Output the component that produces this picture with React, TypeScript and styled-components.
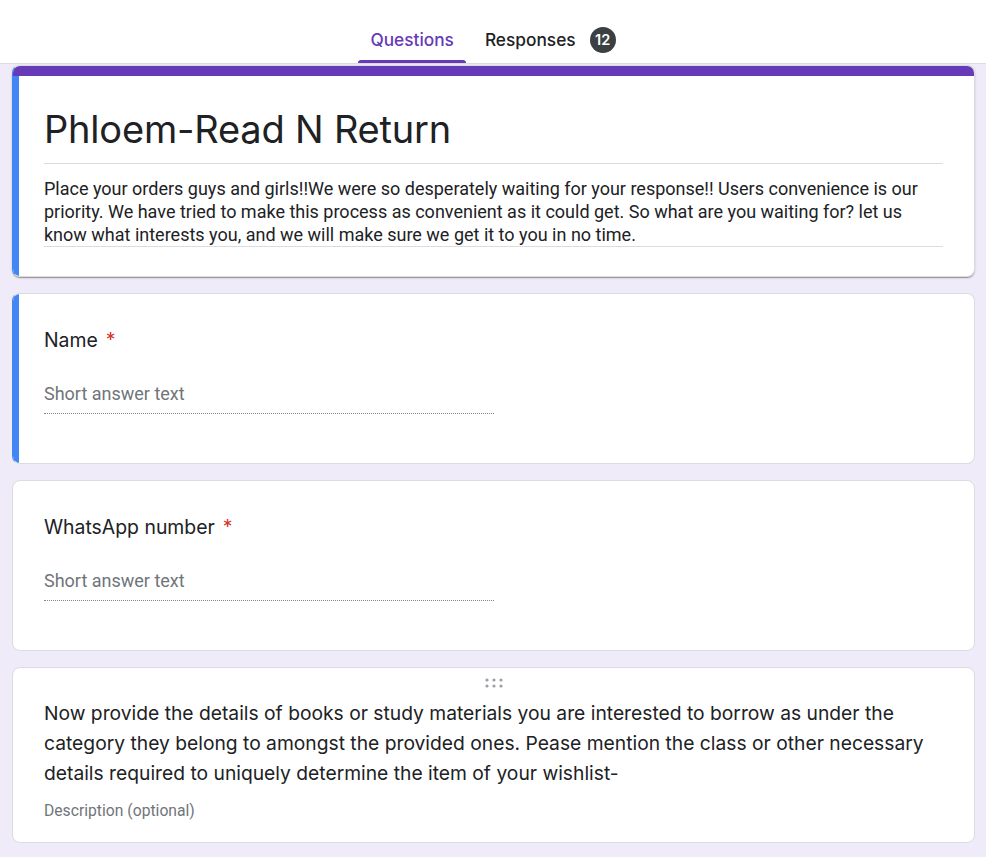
import React from 'react';
import styled, { createGlobalStyle } from 'styled-components';

const GlobalStyle = createGlobalStyle`
  html, body {
    margin: 0;
    padding: 0;
    background: #f0ebf8;
  }
  body {
    font-family: Roboto, "Liberation Sans", Arial, sans-serif;
    color: #202124;
  }
`;

const SANS = `Inter, Roboto, "Liberation Sans", sans-serif`;

const Header = styled.header`
  height: 63px;
  background: #fff;
  border-bottom: 1px solid #dadce0;
  display: flex;
  justify-content: center;
  align-items: flex-end;
  gap: 7px;
`;

const Tab = styled.div`
  height: 48px;
  display: flex;
  flex-direction: column;
  cursor: pointer;
`;

const TabLabel = styled.div<{ $active?: boolean }>`
  flex: 1;
  display: flex;
  align-items: center;
  padding: 4px 12px 0;
  font-family: ${SANS};
  font-size: 17.3px;
  font-weight: 500;
  color: ${p => (p.$active ? '#673ab7' : '#202124')};
`;

const TabLine = styled.div<{ $active?: boolean }>`
  height: 3px;
  border-radius: 3px 3px 0 0;
  background: ${p => (p.$active ? '#673ab7' : 'transparent')};
`;

const Badge = styled.span`
  margin-left: 14px;
  width: 26px;
  height: 26px;
  border-radius: 50%;
  background: #3c4043;
  color: #fff;
  font-family: ${SANS};
  font-size: 14.5px;
  font-weight: 600;
  display: inline-flex;
  align-items: center;
  justify-content: center;
`;

const Main = styled.main`
  padding: 1px 11px 16px 12px;
  display: flex;
  flex-direction: column;
  gap: 16px;
`;

const Card = styled.section<{ $active?: boolean; $raised?: boolean }>`
  background: #fff;
  border: 1px solid #dadce0;
  border-left-color: ${p => (p.$active ? '#4285f4' : '#dadce0')};
  border-radius: 8px;
  overflow: hidden;
  box-shadow: ${p =>
    p.$raised
      ? '0 2px 1px -1px rgba(0,0,0,.2), 0 1px 1px 0 rgba(0,0,0,.14), 0 1px 3px 0 rgba(0,0,0,.12)'
      : 'none'};
`;

const ThemeStrip = styled.div`
  height: 10px;
  background: #673ab7;
`;

const CardBody = styled.div<{ $active?: boolean; $pad: string }>`
  border-left: 6px solid ${p => (p.$active ? '#4285f4' : 'transparent')};
  padding: ${p => p.$pad};
`;

const FormTitle = styled.h1`
  margin: 0;
  font-family: ${SANS};
  font-size: 38px;
  font-weight: 400;
  line-height: 50px;
  letter-spacing: -0.2px;
  padding-bottom: 9px;
  border-bottom: 1px solid #dadce0;
`;

const FormDesc = styled.p`
  margin: 13px 0 0;
  font-size: 18px;
  line-height: 23px;
  border-bottom: 1px solid #dadce0;
`;

const QuestionTitle = styled.div`
  font-family: ${SANS};
  font-size: 19.4px;
  line-height: 24px;
  display: flex;
  gap: 8px;
`;

const Required = styled.span`
  color: #d93025;
`;

const ShortAnswer = styled.div`
  margin-top: 30px;
  width: 450px;
  font-size: 18px;
  line-height: 24px;
  color: #70757a;
  padding-bottom: 7px;
  border-bottom: 1px dotted #80868b;
`;

const DragRow = styled.div`
  height: 24px;
  display: flex;
  justify-content: center;
  align-items: center;
  margin: 0 -32px 0 -31px;
`;

const SectionText = styled.div`
  margin-top: 3px;
  font-family: ${SANS};
  font-size: 19.25px;
  line-height: 30px;
`;

const SectionDesc = styled.div`
  margin-top: 13px;
  font-size: 15.7px;
  line-height: 20px;
  color: #70757a;
`;

function DragHandle() {
  return (
    <svg width="24" height="12" viewBox="0 0 24 12">
      {[5, 12, 19].map(x =>
        [3, 9].map(y => <circle key={`${x}-${y}`} cx={x} cy={y} r="1.6" fill="#9aa0a6" />)
      )}
    </svg>
  );
}

function Question({ title, active }: { title: string; active?: boolean }) {
  return (
    <Card $active={active}>
      <CardBody $active={active} $pad="34px 32px 49px 25px">
        <QuestionTitle>
          {title} <Required>*</Required>
        </QuestionTitle>
        <ShortAnswer>Short answer text</ShortAnswer>
      </CardBody>
    </Card>
  );
}

export default function App() {
  return (
    <>
      <GlobalStyle />
      <Header>
        <Tab>
          <TabLabel $active>Questions</TabLabel>
          <TabLine $active />
        </Tab>
        <Tab>
          <TabLabel>
            Responses <Badge>12</Badge>
          </TabLabel>
          <TabLine />
        </Tab>
      </Header>
      <Main>
        <Card $active $raised>
          <ThemeStrip />
          <CardBody $active $pad="28px 31px 29px 25px">
            <FormTitle>Phloem-Read N Return</FormTitle>
            <FormDesc>
              Place your orders guys and girls!!We were so desperately waiting for your response!! Users
              convenience is our priority. We have tried to make this process as convenient as it could get. So
              what are you waiting for? let us know what interests you, and we will make sure we get it to you in
              no time.
            </FormDesc>
          </CardBody>
        </Card>
        <Question title="Name" active />
        <Question title="WhatsApp number" />
        <Card>
          <CardBody $pad="3px 32px 21px 25px">
            <DragRow>
              <DragHandle />
            </DragRow>
            <SectionText>
              Now provide the details of books or study materials you are interested to borrow as under the
              category they belong to amongst the provided ones. Pease mention the class or other necessary
              details required to uniquely determine the item of your wishlist-
            </SectionText>
            <SectionDesc>Description (optional)</SectionDesc>
          </CardBody>
        </Card>
      </Main>
    </>
  );
}
